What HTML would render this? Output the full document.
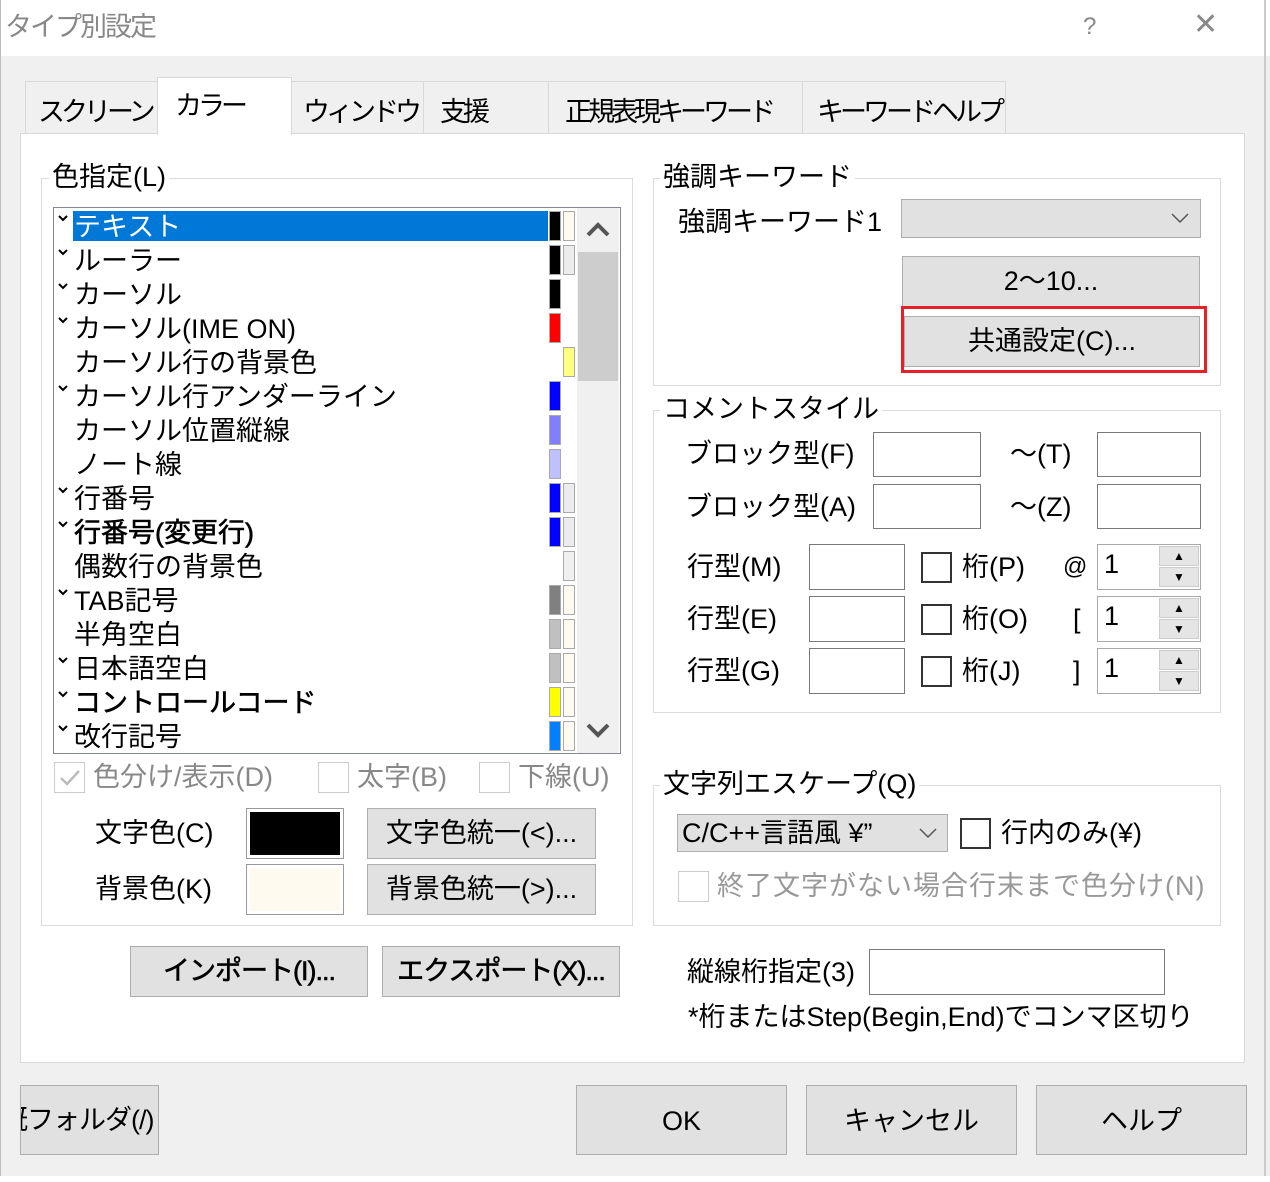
<!DOCTYPE html>
<html><head><meta charset="utf-8"><style>
*{box-sizing:border-box;margin:0;padding:0}
body{width:1270px;height:1182px;position:relative;overflow:hidden;background:#f0f0f0;font-family:"Liberation Sans","Noto Sans CJK JP",sans-serif;font-size:27px;color:#000}
div,span{position:absolute}
.t{white-space:nowrap;line-height:34px}
.tab{letter-spacing:-4px}
.box{border:1px solid #dcdcdc}
.btn{background:#e1e1e1;border:1px solid #adadad;text-align:center;line-height:48px;white-space:nowrap}
.in{background:#fff;border:1px solid #7a7a7a}
.cb{width:31px;height:31px;border:2px solid #333;background:#fff}
.gl{background:#fff;padding:0 3px}
.sw{width:12px;border:1px solid #aaa}
.spin{background:#fff;border:1px solid #aaa}
.ar{width:40px;height:20px;right:1px;background:#e5e5e5;border:1px solid #ccc;text-align:center;font-size:12px;line-height:18px}
</style></head><body>
<div style="left:0;top:0;width:1270px;height:56px;background:#fff"></div>
<div class="t" style="left:5px;top:10px;color:#888;font-size:27px;letter-spacing:-2px">タイプ別設定</div>
<div class="t" style="left:1083px;top:10px;color:#888;font-size:24px">?</div>
<div class="t" style="left:1193px;top:8px;color:#888;font-size:30px">✕</div>
<div style="left:1264px;top:0;width:2px;height:1182px;background:#ccc"></div>
<div style="left:0;top:0;width:1px;height:1182px;background:#bbb"></div>

<div style="left:25px;top:81px;width:981px;height:53px;border:1px solid #d9d9d9;background:#f0f0f0"></div>
<div style="left:157px;top:81px;width:1px;height:53px;background:#d9d9d9"></div>
<div style="left:423px;top:81px;width:1px;height:53px;background:#d9d9d9"></div>
<div style="left:548px;top:81px;width:1px;height:53px;background:#d9d9d9"></div>
<div style="left:802px;top:81px;width:1px;height:53px;background:#d9d9d9"></div>
<div style="left:20px;top:133px;width:1225px;height:930px;background:#fff;border:1px solid #d9d9d9"></div>
<div style="left:157px;top:77px;width:135px;height:58px;background:#fff;border:1px solid #d9d9d9;border-bottom:none"></div>
<div class="t tab" style="left:38px;top:95px">スクリーン</div>
<div class="t tab" style="left:175px;top:89px">カラー</div>
<div class="t tab" style="left:303px;top:95px">ウィンドウ</div>
<div class="t tab" style="left:440px;top:95px">支援</div>
<div class="t tab" style="left:565px;top:95px">正規表現キーワード</div>
<div class="t tab" style="left:817px;top:95px">キーワードヘルプ</div>

<div class="box" style="left:41px;top:178px;width:592px;height:748px"></div>
<div class="t gl" style="left:49px;top:160px">色指定(L)</div>
<div style="left:53px;top:207px;width:568px;height:547px;background:#fff;border:1px solid #828790"></div>
<div style="left:73px;top:211px;width:475px;height:30px;background:#0078d7"></div>
<div style="left:577px;top:208px;width:42px;height:545px;background:#f0f0f0"></div>
<div style="left:578px;top:252px;width:40px;height:129px;background:#cdcdcd"></div>
<svg style="position:absolute;left:585px;top:218px" width="26" height="22"><path d="M3 17 L13 7 L23 17" fill="none" stroke="#555" stroke-width="4"/></svg>
<svg style="position:absolute;left:585px;top:720px" width="26" height="22"><path d="M3 5 L13 15 L23 5" fill="none" stroke="#555" stroke-width="4"/></svg>
<div id="rows"></div>

<div style="left:54px;top:762px;width:31px;height:31px;border:1px solid #ccc;background:#fff"><svg style="position:absolute;left:3px;top:5px" width="24" height="20"><path d="M3 10 L9 16 L21 3" fill="none" stroke="#bbb" stroke-width="2.5"/></svg></div>
<div class="t" style="left:93px;top:760px;color:#888">色分け/表示(D)</div>
<div style="left:318px;top:762px;width:31px;height:31px;border:1px solid #ccc;background:#fff"></div>
<div class="t" style="left:357px;top:760px;color:#888">太字(B)</div>
<div style="left:479px;top:762px;width:31px;height:31px;border:1px solid #ccc;background:#fff"></div>
<div class="t" style="left:518px;top:760px;color:#888">下線(U)</div>

<div class="t" style="left:95px;top:816px">文字色(C)</div>
<div style="left:246px;top:808px;width:98px;height:51px;border:1px solid #999;background:#fff;padding:2px"><div style="left:3px;top:3px;right:3px;bottom:3px;background:#000"></div></div>
<div class="btn" style="left:367px;top:808px;width:229px;height:51px">文字色統一(&lt;)...</div>
<div class="t" style="left:95px;top:872px">背景色(K)</div>
<div style="left:246px;top:864px;width:98px;height:51px;border:1px solid #999;background:#fff"><div style="left:3px;top:3px;right:3px;bottom:3px;background:#fffaf0"></div></div>
<div class="btn" style="left:367px;top:864px;width:229px;height:51px">背景色統一(&gt;)...</div>
<div class="btn" style="left:130px;top:946px;width:238px;height:51px;letter-spacing:-1px;-webkit-text-stroke:0.6px #000">インポート(I)...</div>
<div class="btn" style="left:382px;top:946px;width:238px;height:51px;letter-spacing:-1px;-webkit-text-stroke:0.6px #000">エクスポート(X)...</div>

<div class="box" style="left:653px;top:178px;width:568px;height:208px"></div>
<div class="t gl" style="left:660px;top:160px">強調キーワード</div>
<div class="t" style="left:678px;top:205px">強調キーワード1</div>
<div style="left:901px;top:199px;width:300px;height:39px;background:#e1e1e1;border:1px solid #adadad"></div>
<svg style="position:absolute;left:1170px;top:212px" width="20" height="12"><path d="M2 2 L10 10 L18 2" fill="none" stroke="#555" stroke-width="1.5"/></svg>
<div class="btn" style="left:902px;top:256px;width:298px;height:51px">2〜10...</div>
<div style="left:901px;top:306px;width:306px;height:67px;border:3px solid #e8202a"></div>
<div class="btn" style="left:904px;top:316px;width:296px;height:51px">共通設定(C)...</div>

<div class="box" style="left:653px;top:410px;width:568px;height:303px"></div>
<div class="t gl" style="left:660px;top:392px">コメントスタイル</div>
<div class="t" style="left:685px;top:437px">ブロック型(F)</div>
<div class="in" style="left:873px;top:432px;width:108px;height:45px"></div>
<div class="t" style="left:1010px;top:437px">〜(T)</div>
<div class="in" style="left:1097px;top:432px;width:104px;height:45px"></div>
<div class="t" style="left:685px;top:490px">ブロック型(A)</div>
<div class="in" style="left:873px;top:484px;width:108px;height:45px"></div>
<div class="t" style="left:1010px;top:490px">〜(Z)</div>
<div class="in" style="left:1097px;top:484px;width:104px;height:45px"></div>

<div class="t" style="left:687px;top:550px">行型(M)</div>
<div class="in" style="left:809px;top:544px;width:96px;height:46px"></div>
<div class="cb" style="left:921px;top:552px"></div>
<div class="t" style="left:962px;top:550px">桁(P)</div>
<div class="t" style="left:1063px;top:550px;font-size:24px">@</div>
<div class="spin" style="left:1097px;top:544px;width:104px;height:46px"><span class="t" style="left:6px;top:2px">1</span><div class="ar" style="top:1px">▲</div><div class="ar" style="top:22px">▼</div></div>

<div class="t" style="left:687px;top:602px">行型(E)</div>
<div class="in" style="left:809px;top:596px;width:96px;height:46px"></div>
<div class="cb" style="left:921px;top:604px"></div>
<div class="t" style="left:962px;top:602px">桁(O)</div>
<div class="t" style="left:1073px;top:602px">[</div>
<div class="spin" style="left:1097px;top:596px;width:104px;height:46px"><span class="t" style="left:6px;top:2px">1</span><div class="ar" style="top:1px">▲</div><div class="ar" style="top:22px">▼</div></div>

<div class="t" style="left:687px;top:654px">行型(G)</div>
<div class="in" style="left:809px;top:648px;width:96px;height:46px"></div>
<div class="cb" style="left:921px;top:656px"></div>
<div class="t" style="left:962px;top:654px">桁(J)</div>
<div class="t" style="left:1073px;top:654px">]</div>
<div class="spin" style="left:1097px;top:648px;width:104px;height:46px"><span class="t" style="left:6px;top:2px">1</span><div class="ar" style="top:1px">▲</div><div class="ar" style="top:22px">▼</div></div>

<div class="box" style="left:653px;top:785px;width:568px;height:141px"></div>
<div class="t gl" style="left:660px;top:767px">文字列エスケープ(Q)</div>
<div style="left:677px;top:814px;width:271px;height:38px;background:#e1e1e1;border:1px solid #adadad"></div>
<div class="t" style="left:682px;top:816px">C/C++言語風 ¥”</div>
<svg style="position:absolute;left:918px;top:827px" width="20" height="12"><path d="M2 2 L10 10 L18 2" fill="none" stroke="#555" stroke-width="1.5"/></svg>
<div class="cb" style="left:960px;top:818px"></div>
<div class="t" style="left:1001px;top:816px">行内のみ(¥)</div>
<div style="left:678px;top:871px;width:31px;height:31px;border:1px solid #ccc;background:#fff"></div>
<div style="left:715px;top:865px;width:497px;height:40px;overflow:hidden"><span class="t" style="left:2px;top:4px;color:#999;letter-spacing:1px">終了文字がない場合行末まで色分け(N)</span></div>

<div class="t" style="left:687px;top:955px">縦線桁指定(3)</div>
<div class="in" style="left:869px;top:949px;width:296px;height:46px"></div>
<div class="t" style="left:688px;top:1000px">*桁またはStep(Begin,End)でコンマ区切り</div>

<div style="left:20px;top:1085px;width:139px;height:70px;background:#e1e1e1;border:1px solid #adadad;overflow:hidden"><span class="t" style="left:-20px;top:17px;letter-spacing:-1px">既フォルダ(/)</span></div>
<div class="btn" style="left:576px;top:1085px;width:211px;height:70px;line-height:70px">OK</div>
<div class="btn" style="left:806px;top:1085px;width:211px;height:70px;line-height:70px">キャンセル</div>
<div class="btn" style="left:1036px;top:1085px;width:211px;height:70px;line-height:70px">ヘルプ</div>
<div style="left:0;top:1176px;width:1270px;height:6px;background:#fff"></div>

<script>
var rows=[["テキスト",1,"#000","#fffaf0",1],["ルーラー",1,"#000","#ececec"],["カーソル",1,"#000",null],["カーソル(IME ON)",1,"#f00",null],["カーソル行の背景色",0,null,"#ffff80"],["カーソル行アンダーライン",1,"#00f",null],["カーソル位置縦線",0,"#8080ff",null],["ノート線",0,"#c0c0ff",null],["行番号",1,"#00f","#ececec"],["行番号(変更行)",1,"#00f","#ececec",0,1],["偶数行の背景色",0,null,"#f0f0f0"],["TAB記号",1,"#808080","#fffaf0"],["半角空白",0,"#c0c0c0","#fffaf0"],["日本語空白",1,"#c0c0c0","#fffaf0"],["コントロールコード",1,"#ff0","#fffaf0",0,1],["改行記号",1,"#0080ff","#fffaf0"]];
var h="";
rows.forEach(function(r,i){var y=209+i*34;
if(r[1])h+='<svg style="position:absolute;left:58px;top:'+(y+6)+'px" width="10" height="7"><path d="M1 1 L5 5 L9 1" fill="none" stroke="#000" stroke-width="2"/></svg>';
h+='<div class="t" style="left:74px;top:'+(y+1)+'px;'+(r[4]?'color:#fff;':'')+(r[5]?'-webkit-text-stroke:0.6px #000;':'')+'">'+r[0]+'</div>';
if(r[2])h+='<div class="sw" style="left:549px;top:'+(y+2)+'px;height:30px;background:'+r[2]+'"></div>';
if(r[3])h+='<div class="sw" style="left:563px;top:'+(y+2)+'px;height:30px;background:'+r[3]+'"></div>';});
document.getElementById("rows").outerHTML=h;
</script>
</body></html>
